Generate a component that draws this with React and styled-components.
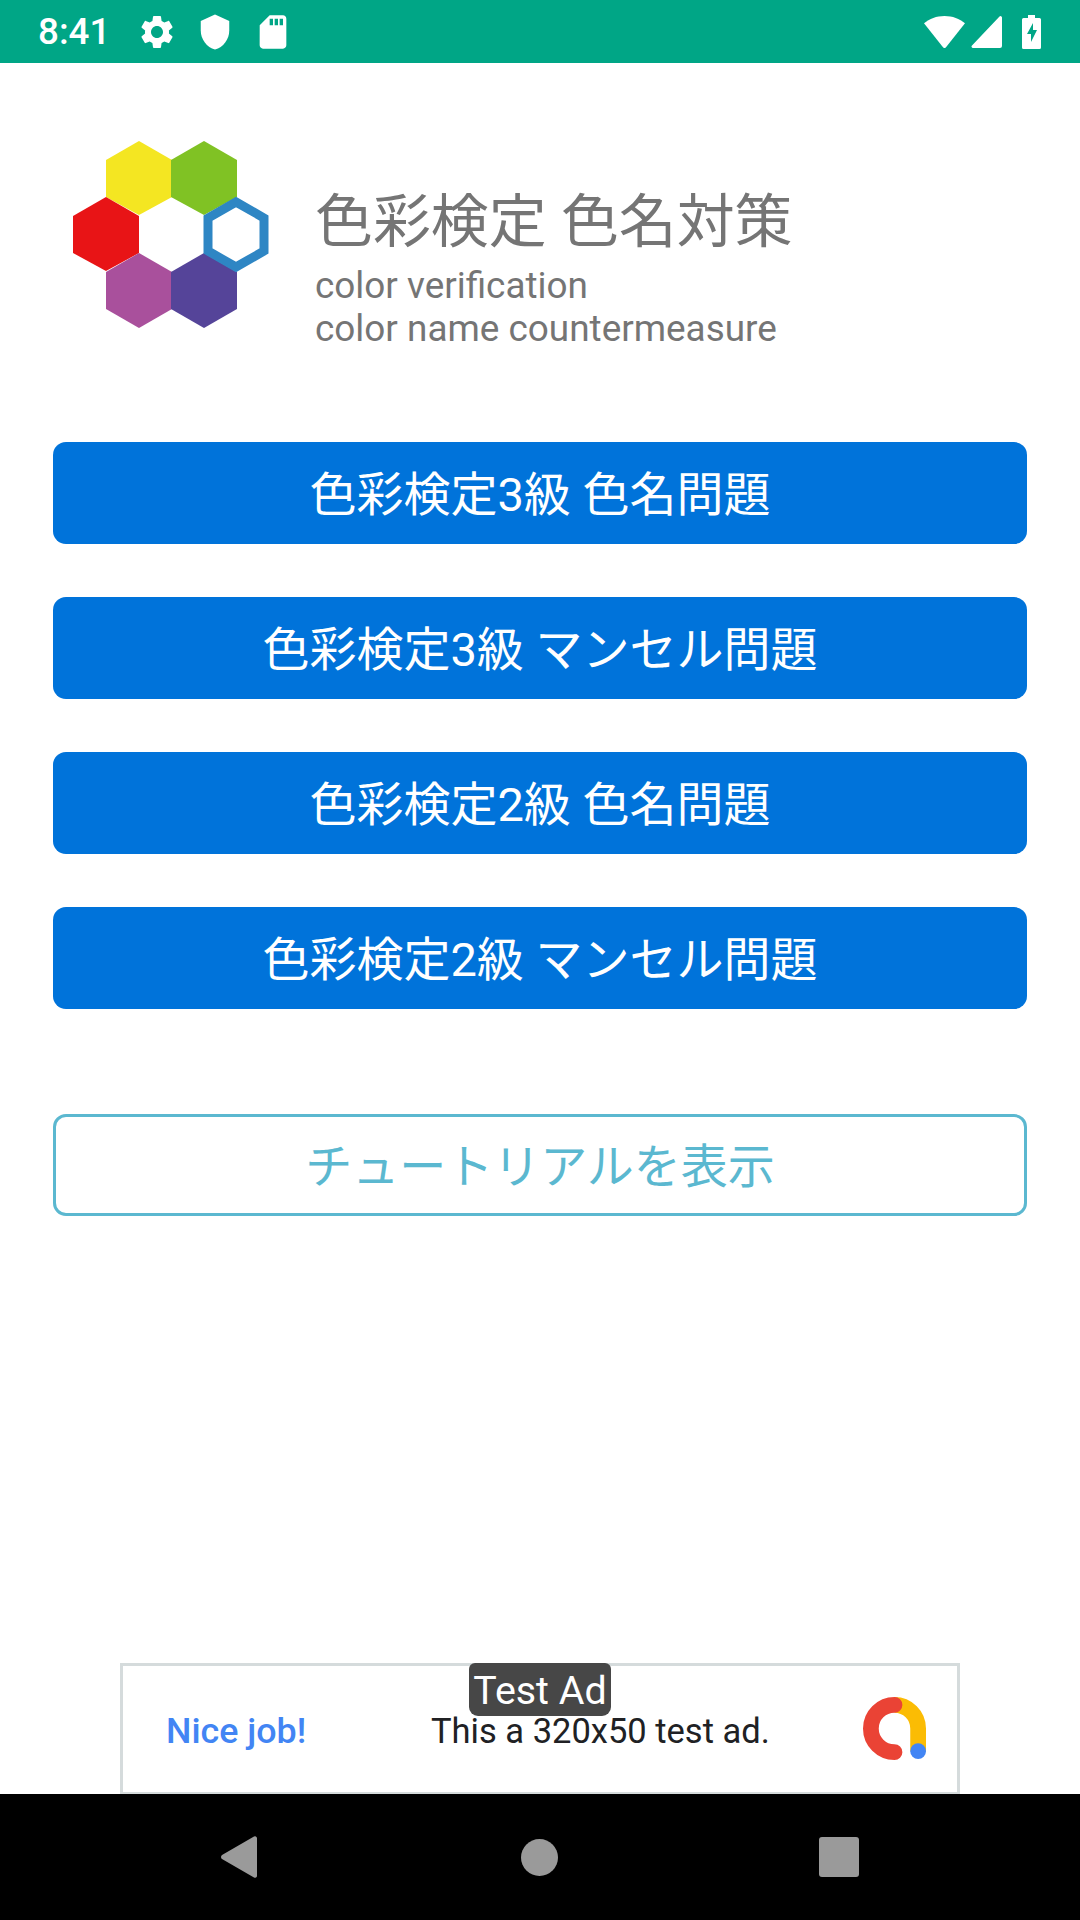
import React from 'react';
import styled, { createGlobalStyle } from 'styled-components';

const GlobalStyle = createGlobalStyle`
    html, body {
        margin: 0;
        padding: 0;
        background: #ffffff;
        font-family: Roboto, "Noto Sans CJK JP", sans-serif;
    }
`

const Screen = styled.div`
    width: 1080px;
    height: 1920px;
    display: flex;
    flex-direction: column;
    overflow: hidden;
    background: #ffffff;
`

const StatusBar = styled.div`
    height: 63px;
    flex-shrink: 0;
    background: #00a686;
    display: flex;
    align-items: center;
    color: #ffffff;
    padding: 0 39px 0 38px;
    box-sizing: border-box;
`

const Clock = styled.span`
    font-size: 36.75px;
    font-weight: 500;
    margin-right: 27px;
`

const StatusIcon = styled.svg`
    display: block;
    fill: #ffffff;
    margin-right: ${(p) => p.$gap || 0}px;
`

const Spacer = styled.div`
    flex: 1;
`

const Main = styled.main`
    flex: 1;
    display: flex;
    flex-direction: column;
    padding: 78px 53px 0;
`

const Header = styled.div`
    display: flex;
    align-items: flex-start;
    padding-left: 20px;
    margin-bottom: 92px;
`

const Logo = styled.svg`
    display: block;
    flex-shrink: 0;
    margin-right: 46px;
`

const HeaderText = styled.div`
    padding-top: 40px;
    color: #757575;
`

const Title = styled.div`
    font-size: 57.9px;
    line-height: 83px;
`

const Subtitle = styled.div`
    font-size: 36.9px;
    line-height: 43px;
`

const ButtonList = styled.div`
    display: flex;
    flex-direction: column;
    gap: 53px;
`

const QuizButton = styled.button`
    height: 102px;
    width: 974px;
    border: none;
    border-radius: 13px;
    background: #0073da;
    color: #ffffff;
    font-family: inherit;
    font-size: 47px;
    padding: 0 0 5px;
`

const TutorialButton = styled.button`
    height: 102px;
    width: 974px;
    margin-top: 105px;
    box-sizing: border-box;
    border: 3px solid #5bb8d0;
    border-radius: 13px;
    background: #ffffff;
    color: #5bb8d0;
    font-family: inherit;
    font-size: 47px;
    padding: 0 0 5px;
`

const AdBanner = styled.div`
    position: relative;
    flex-shrink: 0;
    width: 840px;
    height: 131px;
    margin: 0 auto;
    box-sizing: border-box;
    border: 3px solid #d5dbdc;
    border-bottom-width: 2px;
    background: #ffffff;
    display: flex;
    align-items: center;
    padding: 3px 31px 0 43px;
`

const AdBadge = styled.div`
    position: absolute;
    top: -3px;
    left: 346px;
    width: 142px;
    height: 53px;
    border-radius: 6px 6px 9px 9px;
    background: #474747;
    color: #ffffff;
    font-size: 39.4px;
    line-height: 56px;
    text-align: center;
`

const AdHeadline = styled.span`
    color: #4285f4;
    font-size: 35.8px;
    font-weight: 500;
    width: 265px;
`

const AdText = styled.span`
    color: #202124;
    font-size: 34.5px;
    flex: 1;
`

const AdLogo = styled.svg`
    display: block;
    margin-bottom: 4px;
`

const NavBar = styled.div`
    height: 126px;
    flex-shrink: 0;
    background: #000000;
    display: flex;
    align-items: center;
    justify-content: center;
    padding-right: 2px;
`

const NavCell = styled.div`
    width: 300px;
    display: flex;
    justify-content: center;
`

const NavIcon = styled.svg`
    display: block;
    fill: #9a9a9a;
`

const hexagons = [
    { id: 'yellow', points: '66,0 99,19 99,56 66,74 33,56 33,19', fill: '#f4e622' },
    { id: 'green', points: '131,0 164,19 164,56 131,74 98,56 98,19', fill: '#80c224' },
    { id: 'red', points: '33,56 66,75 66,112 33,130 0,112 0,75', fill: '#e81416' },
    { id: 'purple', points: '66,112 99,131 99,168 66,187 33,168 33,131', fill: '#a9509c' },
    { id: 'indigo', points: '131,112 164,131 164,168 131,187 98,168 98,131', fill: '#554499' },
]

const quizzes = [
    '色彩検定3級 色名問題',
    '色彩検定3級 マンセル問題',
    '色彩検定2級 色名問題',
    '色彩検定2級 マンセル問題',
]

export default function App() {
    return (
        <Screen>
            <GlobalStyle />
            <StatusBar>
                <Clock>8:41</Clock>
                <StatusIcon $gap={19} width="40" height="40" viewBox="0 0 24 24">
                    <path d="M19.14 12.94c.04-.3.06-.61.06-.94 0-.32-.02-.64-.07-.94l2.03-1.58c.18-.14.23-.41.12-.61l-1.92-3.32c-.12-.22-.37-.29-.59-.22l-2.39.96c-.5-.38-1.03-.7-1.62-.94l-.36-2.54c-.04-.24-.24-.41-.48-.41h-3.84c-.24 0-.43.17-.47.41l-.36 2.54c-.59.24-1.13.57-1.62.94l-2.39-.96c-.22-.08-.47 0-.59.22L2.74 8.87c-.12.21-.08.47.12.61l2.03 1.58c-.05.3-.09.63-.09.94s.02.64.07.94l-2.03 1.58c-.18.14-.23.41-.12.61l1.92 3.32c.12.22.37.29.59.22l2.39-.96c.5.38 1.03.7 1.62.94l.36 2.54c.05.24.24.41.48.41h3.84c.24 0 .44-.17.47-.41l.36-2.54c.59-.24 1.13-.56 1.62-.94l2.39.96c.22.08.47 0 .59-.22l1.92-3.32c.12-.22.07-.47-.12-.61l-2.01-1.58zM12 15.6c-1.98 0-3.6-1.62-3.6-3.6s1.62-3.6 3.6-3.6 3.6 1.62 3.6 3.6-1.62 3.6-3.6 3.6z" />
                </StatusIcon>
                <StatusIcon $gap={19} width="38" height="38" viewBox="0 0 24 24">
                    <path d="M12 1L3 5v6c0 5.55 3.84 10.74 9 12 5.16-1.26 9-6.45 9-12V5l-9-4z" />
                </StatusIcon>
                <StatusIcon width="40" height="40" viewBox="0 0 24 24">
                    <path d="M18 2h-8L4.02 8 4 20c0 1.1.9 2 2 2h12c1.1 0 2-.9 2-2V4c0-1.1-.9-2-2-2zm-6 6h-2V4h2v4zm3 0h-2V4h2v4zm3 0h-2V4h2v4z" />
                </StatusIcon>
                <Spacer />
                <StatusIcon $gap={6} width="41" height="32" viewBox="0 0 41 32">
                    <path d="M20.5 0C12.5 0 5.5 2.8 0 7.2L18.8 31a2.2 2.2 0 0 0 3.4 0L41 7.2C35.5 2.8 28.5 0 20.5 0z" />
                </StatusIcon>
                <StatusIcon $gap={20} width="31" height="32" viewBox="0 0 31 32">
                    <path d="M31 1.5V30a2 2 0 0 1-2 2H2a1.5 1.5 0 0 1-1-2.6L28.5.5A1.5 1.5 0 0 1 31 1.5z" />
                </StatusIcon>
                <StatusIcon width="19" height="34" viewBox="0 0 19 34">
                    <path d="M6 0h7v3h4.500A1.500 1.500 0 0 1 19 4.500V32.500A1.500 1.500 0 0 1 17.500 34H1.500A1.500 1.500 0 0 1 0 32.500V4.500A1.500 1.500 0 0 1 1.500 3H6zM11 8 5 19h4v8l6-12h-4z" fillRule="evenodd" />
                </StatusIcon>
            </StatusBar>

            <Main>
                <Header>
                    <Logo width="196" height="187" viewBox="0 0 196 187">
                        {hexagons.map((hex) => (
                            <polygon key={hex.id} points={hex.points} fill={hex.fill} />
                        ))}
                        <polygon
                            points="163,61 191,77 191,110 163,126 135,110 135,77"
                            fill="none"
                            stroke="#2e86c4"
                            strokeWidth="9"
                        />
                    </Logo>
                    <HeaderText>
                        <Title>色彩検定 色名対策</Title>
                        <Subtitle>color verification</Subtitle>
                        <Subtitle>color name countermeasure</Subtitle>
                    </HeaderText>
                </Header>

                <ButtonList>
                    {quizzes.map((label) => (
                        <QuizButton key={label}>{label}</QuizButton>
                    ))}
                </ButtonList>
                <TutorialButton>チュートリアルを表示</TutorialButton>
            </Main>

            <AdBanner>
                <AdBadge>Test Ad</AdBadge>
                <AdHeadline>Nice job!</AdHeadline>
                <AdText>This a 320x50 test ad.</AdText>
                <AdLogo width="63" height="63" viewBox="0 0 64 64">
                    <path d="M32 8A24 24 0 0 1 56 32V55" fill="none" stroke="#fbbc04" strokeWidth="16" />
                    <path d="M32 8A24 24 0 0 0 32 56" fill="none" stroke="#ea4335" strokeWidth="16" strokeLinecap="round" />
                    <circle cx="56" cy="55" r="8" fill="#4285f4" />
                </AdLogo>
            </AdBanner>

            <NavBar>
                <NavCell>
                    <NavIcon width="36" height="42" viewBox="0 0 36 42">
                        <path d="M33 .5a2 2 0 0 1 3 1.500V40a2 2 0 0 1-3 1.500L1 23a2.500 2.500 0 0 1 0-4z" />
                    </NavIcon>
                </NavCell>
                <NavCell>
                    <NavIcon width="37" height="37" viewBox="0 0 37 37">
                        <circle cx="18.5" cy="18.5" r="18.5" />
                    </NavIcon>
                </NavCell>
                <NavCell>
                    <NavIcon width="40" height="40" viewBox="0 0 40 40">
                        <rect width="40" height="40" rx="3" />
                    </NavIcon>
                </NavCell>
            </NavBar>
        </Screen>
    )
}
